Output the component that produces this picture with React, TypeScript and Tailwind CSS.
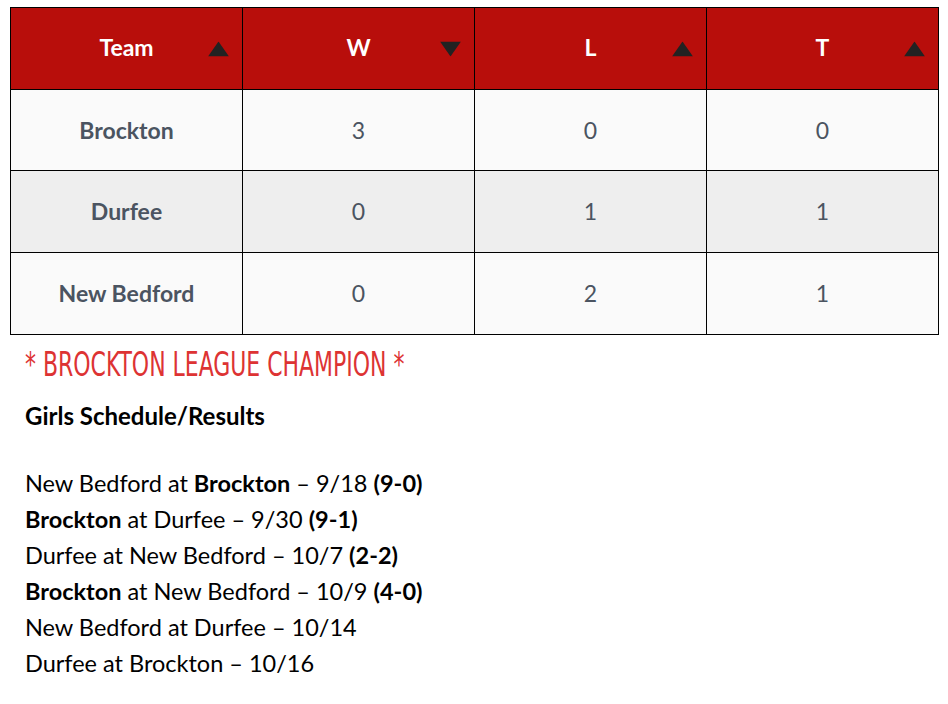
const rows = [
  { team: "Brockton", w: 3, l: 0, t: 0, bg: "bg-[#fafafa]", h: "h-[81px]" },
  { team: "Durfee", w: 0, l: 1, t: 1, bg: "bg-[#eeeeee]", h: "h-[82px]" },
  { team: "New Bedford", w: 0, l: 2, t: 1, bg: "bg-[#fafafa]", h: "h-[82px]" },
];

const headers: { label: string; dir: "up" | "down" }[] = [
  { label: "Team", dir: "up" },
  { label: "W", dir: "down" },
  { label: "L", dir: "up" },
  { label: "T", dir: "up" },
];

function Arrow({ dir }: { dir: "up" | "down" }) {
  return (
    <svg width="21" height="15" viewBox="0 0 21 15" className="absolute right-[13px] top-1/2 -translate-y-1/2">
      {dir === "up" ? (
        <polygon points="10.5,0 21,15 0,15" fill="#222222" />
      ) : (
        <polygon points="0,0 21,0 10.5,15" fill="#222222" />
      )}
    </svg>
  );
}

export default function App() {
  return (
    <div className="w-[948px] h-[704px] bg-white font-['Lato','Open_Sans',sans-serif] overflow-hidden">
      <div className="pt-[7px] pl-[10px]">
        <table className="w-[929px] border-collapse table-fixed">
          <thead>
            <tr className="h-[82px] bg-[#b80e0b]">
              {headers.map((h) => (
                <th
                  key={h.label}
                  className="relative border border-black text-white text-[23px] font-bold text-center pb-[3px]"
                >
                  {h.label}
                  <Arrow dir={h.dir} />
                </th>
              ))}
            </tr>
          </thead>
          <tbody>
            {rows.map((r) => (
              <tr key={r.team} className={`${r.h} ${r.bg}`}>
                <td className="border border-black text-center text-[23px] font-bold text-[#4b5461]">
                  {r.team}
                </td>
                <td className="border border-black text-center text-[23px] text-[#4b5461]">{r.w}</td>
                <td className="border border-black text-center text-[23px] text-[#4b5461]">{r.l}</td>
                <td className="border border-black text-center text-[23px] text-[#4b5461]">{r.t}</td>
              </tr>
            ))}
          </tbody>
        </table>
      </div>
      <div className="px-[25px]">
        <h2 className="mt-[8px] text-[33px] leading-[44px] text-[#dd3333] font-['DejaVu_Sans_Condensed',sans-serif] whitespace-nowrap origin-left scale-x-[0.74]">
          * BROCKTON LEAGUE CHAMPION *
        </h2>
        <h3 className="mt-[14px] text-[24px] leading-[30px] font-bold text-black">Girls Schedule/Results</h3>
        <div className="mt-[34px] text-[23.5px] leading-[36px] text-black">
          <p>
            New Bedford at <b>Brockton</b> – 9/18 <b>(9-0)</b>
          </p>
          <p>
            <b>Brockton</b> at Durfee – 9/30 <b>(9-1)</b>
          </p>
          <p>
            Durfee at New Bedford – 10/7 <b>(2-2)</b>
          </p>
          <p>
            <b>Brockton</b> at New Bedford – 10/9 <b>(4-0)</b>
          </p>
          <p>New Bedford at Durfee – 10/14</p>
          <p>Durfee at Brockton – 10/16</p>
        </div>
      </div>
    </div>
  );
}
